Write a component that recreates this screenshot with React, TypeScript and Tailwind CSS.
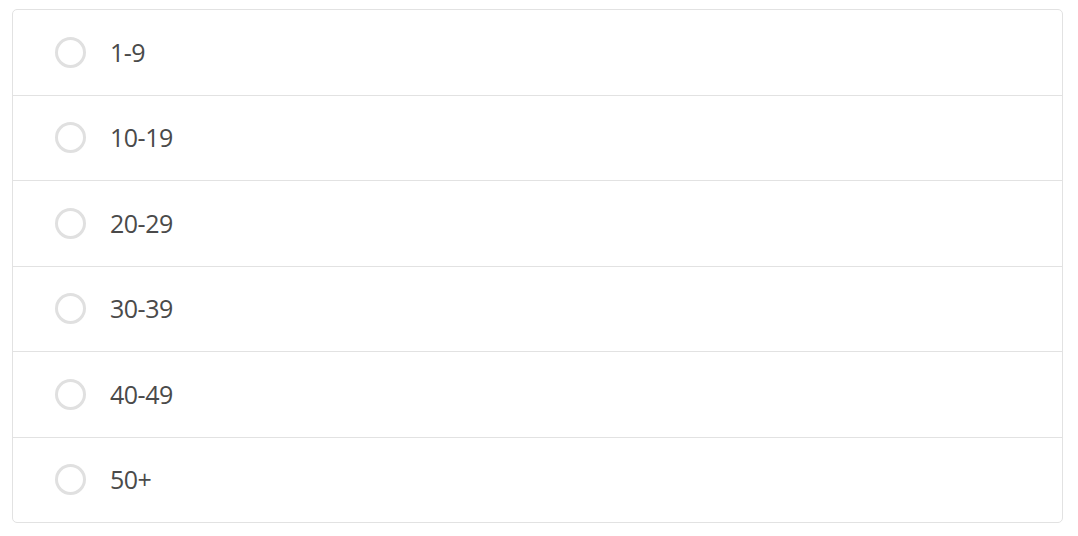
import React from 'react';

const options = ['1-9', '10-19', '20-29', '30-39', '40-49', '50+'];

const App = () => {
  return (
    <div className="w-[1078px] h-[536px] bg-white pt-[9px] pl-[12px]">
      <div className="w-[1051px] h-[514px] flex flex-col border border-[#e2e2e2] rounded-[5px] overflow-hidden">
        {options.map((label, i) => (
          <label
            key={label}
            className={`flex-1 flex items-center pl-[42px] gap-[24px] cursor-pointer ${i > 0 ? 'border-t border-[#e2e2e2]' : ''}`}
          >
            <span className="w-[31px] h-[31px] rounded-full border-[3px] border-[#e0e0e0] bg-white" />
            <span
              className="text-[25px] text-[#4a4a4a] leading-none tracking-[-0.5px]"
              style={{ fontFamily: '"Source Sans Pro", "Open Sans", Lato, sans-serif' }}
            >
              {label}
            </span>
          </label>
        ))}
      </div>
    </div>
  );
};

export default App;
